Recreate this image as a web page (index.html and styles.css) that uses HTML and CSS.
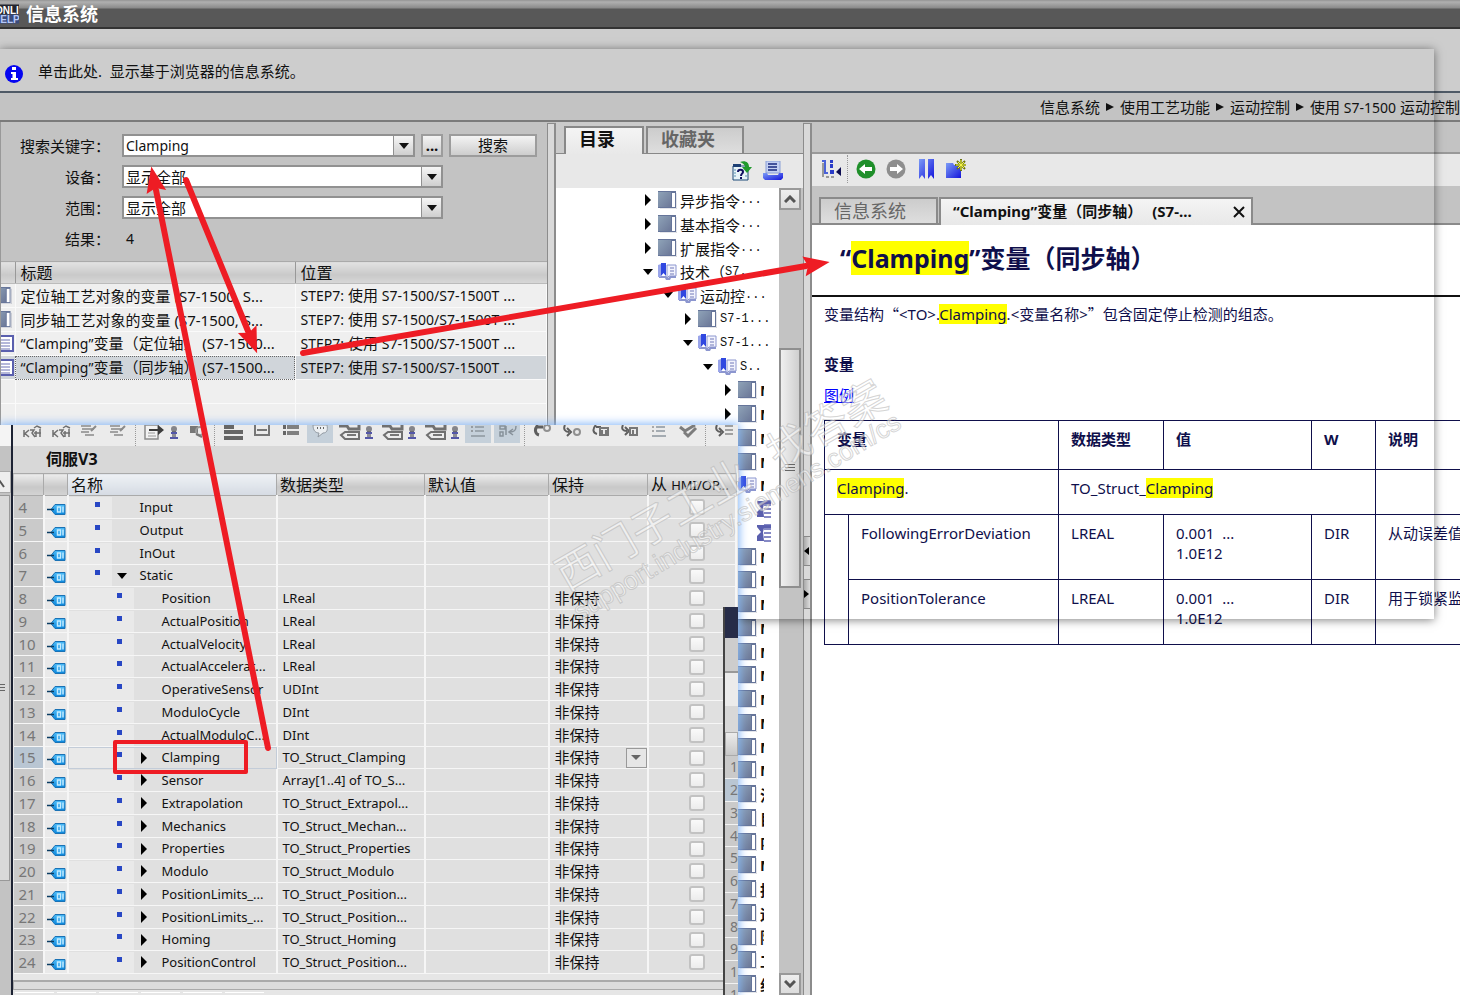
FILE: index.html
```
<!DOCTYPE html>
<html lang="zh-CN">
<head>
    <meta charset="UTF-8">
    <meta name="viewport" content="width=device-width, initial-scale=1.0">
    <title>信息系统</title>
    <link rel="stylesheet" href="styles.css">
</head>
<body>

    <!-- Shared icons -->
    <svg class="icon-defs" aria-hidden="true">
        <defs>
            <linearGradient id="bookFill" x1="0" y1="0" x2="1" y2="1">
                <stop offset="0" stop-color="#8fa3b8"/>
                <stop offset="1" stop-color="#6c7898"/>
            </linearGradient>
            <linearGradient id="tagFill" x1="0" y1="0" x2="0" y2="1">
                <stop offset="0" stop-color="#4dbcf8"/>
                <stop offset="1" stop-color="#0a86dc"/>
            </linearGradient>
            <linearGradient id="blueFill" x1="0" y1="0" x2="1" y2="1">
                <stop offset="0" stop-color="#7c9cf6"/>
                <stop offset="1" stop-color="#1414dc"/>
            </linearGradient>
            <symbol id="book" viewBox="0 0 19 18">
                <path d="M2 18h17V2" fill="none" stroke="#c8cad2" stroke-width="1"/>
                <rect x="0" y="0" width="18" height="17" fill="#66759a"/>
                <rect x="0" y="1" width="13" height="15" fill="url(#bookFill)"/>
                <rect x="14" y="2" width="3" height="14" fill="#fff"/>
            </symbol>
            <symbol id="openbook" viewBox="0 0 19 18">
                <path d="M1 13h7l2 2 2-2h6v2h-5l-1 2H8l-1-2H1z" fill="#8c96cf"/>
                <path d="M0 2l3-1v13H0z" fill="#9aa5ea"/>
                <path d="M3 0h5v13L5.500 10 3 13z" fill="#3048e0"/>
                <path d="M9 2h9v11h-7l-2 2z" fill="#f3f4fd" stroke="#8c96cf"/>
                <path d="M12 5h4M12 8h4M12 11h4" stroke="#7079b8" stroke-width="1"/>
            </symbol>
            <symbol id="page" viewBox="0 0 19 18">
                <path d="M0 1h14v3H7l-1 4 1 9H0v-5l4-4-4-5z" fill="#5a5fae"/>
                <path d="M7 1h7M7 5h7M7 9h7M7 13h7M7 17h7" stroke="#5f64b2" stroke-width="1.500"/>
            </symbol>
            <symbol id="doc" viewBox="0 0 14 17">
                <rect x="-4" y="1" width="16" height="15" fill="#fff" stroke="#5a5fae" stroke-width="2"/>
                <path d="M0 5h9M0 8h9M0 11h9M0 14h9" stroke="#6a70b4"/>
            </symbol>
            <symbol id="tag" viewBox="0 0 19 13">
                <path d="M4 6.500l4-5h10v10H8z" fill="url(#tagFill)" stroke="#1a72b5" stroke-width="1"/>
                <path d="M0 6.500h7" stroke="#0b3c63" stroke-width="1.500"/>
                <path d="M10.500 4h3v5h-3zM16 3.500v6" fill="none" stroke="#c4ecff" stroke-width="1.500"/>
            </symbol>
            <symbol id="monitor" viewBox="0 0 26 18">
                <path d="M6 5v7M11 5l-4 3.500 4 3.500M12 5h4l-2 3 3 4M16 3l3-2 4 2M18 6v6M22 4v8M16 8h7" fill="none" stroke="#707070" stroke-width="1.500"/>
            </symbol>
            <symbol id="lines" viewBox="0 0 26 18">
                <path d="M5 1h10M6 4h12M5 7h8M9 10h9" stroke="#8a8a8a" stroke-width="1.500"/>
                <path d="M15 6l5-5" stroke="#8a8a8a" stroke-width="2"/>
            </symbol>
            <symbol id="export" viewBox="0 0 26 18">
                <path d="M4 0h13v14H4z" fill="#f2f2f2" stroke="#8c8c8c" stroke-width="1.500"/>
                <path d="M7 8h7M7 11h8" stroke="#9a9a9a"/>
                <path d="M8 4h9V0l6 5-6 5V6H8z" fill="#3d3d3d"/>
            </symbol>
            <symbol id="person" viewBox="0 0 14 18">
                <circle cx="7" cy="4" r="3" fill="#85858a"/>
                <path d="M5 6h4v4H5z" fill="#6a6a72"/>
                <path d="M4 8h6M3 13h8" stroke="#5457a8" stroke-width="2"/>
                <path d="M5 9h4v3H5z" fill="#8d8d95"/>
            </symbol>
            <symbol id="drag" viewBox="0 0 26 18">
                <path d="M6 1h8v7H6z" fill="#777"/>
                <circle cx="16" cy="6" r="4" fill="none" stroke="#999" stroke-width="2"/>
                <path d="M12 9l6 3" fill="none" stroke="#777" stroke-width="2"/>
            </symbol>
            <symbol id="bars" viewBox="0 0 26 18">
                <path d="M4 2h10M4 7h19M4 13h19" stroke="#666" stroke-width="4"/>
            </symbol>
            <symbol id="frame" viewBox="0 0 26 18">
                <path d="M6 0v10h14V0M8 5h10" fill="none" stroke="#777" stroke-width="2"/>
            </symbol>
            <symbol id="block" viewBox="0 0 26 18">
                <path d="M9 2h12M9 8h12" stroke="#808080" stroke-width="4"/>
                <path d="M5 0h3v4H5zM5 6h3v4H5z" fill="#666"/>
            </symbol>
            <symbol id="bubble" viewBox="0 0 26 18">
                <path d="M6 0c0 6 3 8 6 8l-1 4 5-4c4 0 5-3 4-8z" fill="#eceff2" stroke="#929aa2"/>
                <path d="M10 3h1M13 3h1M16 3h1" stroke="#666" stroke-width="2"/>
            </symbol>
            <symbol id="tags" viewBox="0 0 26 18">
                <path d="M3 1h8l2 3h10V0" fill="none" stroke="#707070" stroke-width="3"/>
                <path d="M5 10l4-3h14v7H9z" fill="#ededed" stroke="#707070" stroke-width="2"/>
                <path d="M11 10h9" stroke="#777" stroke-width="2"/>
            </symbol>
            <symbol id="list" viewBox="0 0 26 18">
                <path d="M10 2h9M10 6h9M6 11h14" stroke="#8d969e" stroke-width="1.500"/>
                <path d="M6 2h2M6 6h2" stroke="#666"/>
            </symbol>
            <symbol id="sorted" viewBox="0 0 26 18">
                <path d="M6 1h5v3H6zM6 7h3v4H6zM22 1c0 5-2 6-6 6M19 4l-4 3 4 3M12 1v9" fill="none" stroke="#87919a" stroke-width="1.500"/>
            </symbol>
            <symbol id="undo" viewBox="0 0 26 18">
                <path d="M8 0c-4 4-3 9 1 10M7 2h6" fill="none" stroke="#5e5e5e" stroke-width="3"/>
                <circle cx="17" cy="3" r="3" fill="none" stroke="#909090" stroke-width="2"/>
            </symbol>
            <symbol id="redo" viewBox="0 0 26 18">
                <path d="M6 0c-2 4 0 7 4 7M8 3l4 4-4 4" fill="none" stroke="#5e5e5e" stroke-width="2"/>
                <circle cx="18" cy="7" r="3" fill="none" stroke="#909090" stroke-width="2"/>
            </symbol>
            <symbol id="undoBlock" viewBox="0 0 26 18">
                <path d="M8 0c-4 4-3 8 1 9M8 2h5" fill="none" stroke="#5e5e5e" stroke-width="2"/>
                <path d="M12 3h8v7h-8zM14 5v4M18 5v4" fill="none" stroke="#777" stroke-width="2"/>
            </symbol>
            <symbol id="redoBlock" viewBox="0 0 26 18">
                <path d="M6 0c-2 4 0 6 4 6M8 2l4 4-4 4" fill="none" stroke="#5e5e5e" stroke-width="2"/>
                <path d="M13 3h7v7h-7zM16 5v4" fill="none" stroke="#777" stroke-width="2"/>
            </symbol>
            <symbol id="redoList" viewBox="0 0 26 18">
                <path d="M6 0c-2 4 0 7 4 7M8 3l4 4-4 4" fill="none" stroke="#5e5e5e" stroke-width="2"/>
                <path d="M14 1h8M14 5h8M14 9h8" stroke="#888" stroke-width="1.500"/>
            </symbol>
            <symbol id="checks" viewBox="0 0 26 18">
                <path d="M5 2l5 4 10-6M9 7l4 4 8-8" fill="none" stroke="#7c7c7c" stroke-width="3"/>
            </symbol>
        </defs>
    </svg>

    <!-- Help window -->
    <div class="help-window">
        <header class="title-bar">
            <svg class="title-logo" viewBox="0 0 19 19">
                <rect width="19" height="10" fill="#23252e"/>
                <rect y="10" width="19" height="9" fill="#3a4b7c"/>
                <text class="logo-text" x="-5" y="9" fill="#fff">ONLI</text>
                <text class="logo-text" x="-7" y="18" fill="#b6c8f8">HELP</text>
            </svg>
            <h1>信息系统</h1>
        </header>

        <div class="notice">
            <svg class="info-icon" viewBox="0 0 20 20">
                <circle cx="10" cy="10" r="9" fill="#0505f0"/>
                <path d="M8 3h4v3H8zM7 8h5v6h2v2H7v-2h1.500v-4H7z" fill="#fff"/>
            </svg>
            <span>单击此处.&nbsp; 显示基于浏览器的信息系统。</span>
        </div>

        <nav class="breadcrumb">
            <span>信息系统</span><i class="caret"></i>
            <span>使用工艺功能</span><i class="caret"></i>
            <span>运动控制</span><i class="caret"></i>
            <span>使用 <small>S7-1500</small> 运动控制</span>
        </nav>

        <main class="columns">
            <section class="search-pane">
                <form class="search-form">
                    <label for="keyword">搜索关键字<span class="colon">：</span></label>
                    <div class="field-row">
                        <div class="combo keyword">
                            <input type="text" id="keyword" value="Clamping">
                            <button type="button" class="drop" aria-label="历史"></button>
                        </div>
                        <button type="button" class="btn more">...</button>
                        <button type="button" class="btn search">搜索</button>
                    </div>
                    <label for="device">设备<span class="colon">：</span></label>
                    <div class="combo"><select id="device"><option>显示全部</option></select><i class="drop"></i></div>
                    <label for="range">范围<span class="colon">：</span></label>
                    <div class="combo"><select id="range"><option>显示全部</option></select><i class="drop"></i></div>
                    <span class="label">结果<span class="colon">：</span></span>
                    <output class="count">4</output>
                </form>

                <table class="results">
                    <thead>
                        <tr><th class="col-icon"></th><th class="col-title">标题</th><th>位置</th></tr>
                    </thead>
                    <tbody>
                        <tr>
                            <td><svg class="icon-half"><use href="#book"/></svg></td>
                            <td>定位轴工艺对象的变量 (S7-1500, S...</td>
                            <td><small>STEP7:</small> 使用 <small>S7-1500/S7-1500T</small> ...</td>
                        </tr>
                        <tr>
                            <td><svg class="icon-half"><use href="#book"/></svg></td>
                            <td>同步轴工艺对象的变量 (S7-1500, S...</td>
                            <td><small>STEP7:</small> 使用 <small>S7-1500/S7-1500T</small> ...</td>
                        </tr>
                        <tr>
                            <td><svg class="icon-doc"><use href="#doc"/></svg></td>
                            <td><small>“Clamping”</small>变量（定位轴） (S7-1500...</td>
                            <td><small>STEP7:</small> 使用 <small>S7-1500/S7-1500T</small> ...</td>
                        </tr>
                        <tr class="selected">
                            <td><svg class="icon-doc"><use href="#doc"/></svg></td>
                            <td><small>“Clamping”</small>变量（同步轴） (S7-1500...</td>
                            <td><small>STEP7:</small> 使用 <small>S7-1500/S7-1500T</small> ...</td>
                        </tr>
                        <tr><td></td><td></td><td></td></tr>
                        <tr><td></td><td></td><td></td></tr>
                        <tr><td></td><td></td><td></td></tr>
                    </tbody>
                </table>
            </section>

            <div class="splitter"></div>

            <section class="toc-pane">
                <div class="tabs">
                    <button class="tab active">目录</button>
                    <button class="tab">收藏夹</button>
                </div>
                <div class="toc-tools">
                    <button class="tool" aria-label="同步目录">
                        <svg viewBox="0 0 20 20">
                            <path d="M1 5h15v14H1z" fill="#e8f4f8" stroke="#1c4a78"/>
                            <path d="M1 3h8v3H1z" fill="#1c3f74"/>
                            <path d="M6 11c0-3 5-3 5 0 0 2-2 1-2 4M9 16v2" fill="none" stroke="#101060" stroke-width="2"/>
                            <path d="M2 9h2M2 12h2M2 15h2M13 15h2" stroke="#5b93b3"/>
                            <path d="M8 1c5-2 9 0 9 5h3l-5 6-5-6h3c0-2-2-4-5-5z" fill="#1f9a2c"/>
                        </svg>
                    </button>
                    <button class="tool" aria-label="打印">
                        <svg viewBox="0 0 20 20">
                            <path d="M3 0h14v12H3z" fill="#c3cff2" stroke="#8a9fd6"/>
                            <path d="M5 3h9M5 6h9M5 9h9" stroke="#1a2a80" stroke-width="1.500"/>
                            <path d="M0 12h4l1 2h10l1-2h4v5l-2 2H2l-2-2z" fill="url(#blueFill)"/>
                        </svg>
                    </button>
                </div>
                <div class="toc-body">
                    <ul class="tree" id="tree"></ul>
                    <div class="scrollbar">
                        <button class="scroll-btn" aria-label="向上"><svg viewBox="0 0 12 8"><path d="M1 7l5-5 5 5" fill="none" stroke="#555" stroke-width="3"/></svg></button>
                        <div class="scroll-track"><div class="scroll-thumb"></div></div>
                        <button class="scroll-btn" aria-label="向下"><svg viewBox="0 0 12 8"><path d="M1 1l5 5 5-5" fill="none" stroke="#555" stroke-width="3"/></svg></button>
                    </div>
                </div>
            </section>

            <div class="splitter with-grips">
                <button class="grip" aria-label="收起"><svg viewBox="0 0 5 8"><path d="M5 0v8L0 4z"/></svg></button>
                <button class="grip" aria-label="展开"><svg viewBox="0 0 5 8"><path d="M0 0v8l5-4z"/></svg></button>
            </div>

            <section class="content-pane">
                <div class="content-tools">
                    <button class="tool" aria-label="隐藏目录">
                        <svg viewBox="0 0 20 20">
                            <path d="M1 2h3v12h3" fill="none" stroke="#4a62d8" stroke-width="2"/>
                            <path d="M9 1h3v3H9zM9 5h3v4H9zM9 11h4v4H9z" fill="#2a3cc8"/>
                            <path d="M2 4v14M5 18h3M10 18h3" stroke="#999" stroke-width="2"/>
                            <path d="M20 8v9l-5-4z" fill="#0c0c50"/>
                        </svg>
                    </button>
                    <span class="tool-sep"></span>
                    <button class="tool" aria-label="后退">
                        <svg viewBox="0 0 20 20">
                            <circle cx="10" cy="10" r="9.500" fill="#1f8f2a"/>
                            <path d="M3 10l6-5v3h7v4H9v3z" fill="#fff"/>
                        </svg>
                    </button>
                    <button class="tool" aria-label="前进">
                        <svg viewBox="0 0 20 20">
                            <circle cx="10" cy="10" r="9.500" fill="#8e8e8e"/>
                            <path d="M17 10l-6-5v3H4v4h7v3z" fill="#fff"/>
                        </svg>
                    </button>
                    <button class="tool" aria-label="书签">
                        <svg viewBox="0 0 20 20">
                            <path d="M3 0h6v20l-3-4-3 4zM12 0h6v20l-3-4-3 4z" fill="url(#blueFill)"/>
                        </svg>
                    </button>
                    <button class="tool" aria-label="添加到收藏夹">
                        <svg viewBox="0 0 20 20">
                            <path d="M0 4h7l1 2h7v13H0z" fill="url(#blueFill)"/>
                            <path d="M15 0v12M9 6h12M11 2l8 8M19 2l-8 8" stroke="#6b7410" stroke-width="2"/>
                            <path d="M15 1v10M10 6h10M12 3l6 6M18 3l-6 6" stroke="#f6f64a" stroke-width="1"/>
                        </svg>
                    </button>
                </div>

                <div class="doc-tabs">
                    <button class="doc-tab">信息系统</button>
                    <button class="doc-tab active">“Clamping”变量（同步轴）<span class="tab-more">(S7-...</span><svg class="close" viewBox="0 0 12 12"><path d="M1 1l10 10M11 1L1 11" stroke="#111" stroke-width="2"/></svg></button>
                </div>

                <article class="doc">
                    <h2>“<mark>Clamping</mark>”变量（同步轴）</h2>
                    <div class="doc-body">
                        <p>变量结构<span class="wide">“</span>&lt;TO&gt;.<mark>Clamping</mark>.&lt;变量名称&gt;<span class="wide">”</span>包含固定停止检测的组态。</p>
                        <h3>变量</h3>
                        <p class="legend"><a href="#legend">图例</a></p>
                        <table class="vars">
                            <colgroup>
                                <col class="c-indent"><col class="c-name"><col class="c-type"><col class="c-value"><col class="c-w"><col>
                            </colgroup>
                            <tr class="head">
                                <th colspan="2">变量</th><th>数据类型</th><th>值</th><th>W</th><th>说明</th>
                            </tr>
                            <tr class="struct">
                                <td colspan="2"><mark>Clamping</mark>.</td>
                                <td colspan="3">TO_Struct_<mark>Clamping</mark></td>
                                <td></td>
                            </tr>
                            <tr>
                                <td rowspan="2"></td>
                                <td>FollowingErrorDeviation</td><td>LREAL</td><td>0.001&nbsp; ...<br>1.0E12</td><td>DIR</td><td>从动误差值</td>
                            </tr>
                            <tr>
                                <td>PositionTolerance</td><td>LREAL</td><td>0.001&nbsp; ...<br>1.0E12</td><td>DIR</td><td>用于锁紧监</td>
                            </tr>
                        </table>
                    </div>
                </article>
            </section>
        </main>
    </div>

    <div class="snap-frame"></div>

    <!-- Data block editor, lies over the help window -->
    <div class="editor-window">
        <div class="edge">
            <div class="edge-top"></div>
            <div class="edge-title"></div>
            <div class="edge-btn"><svg viewBox="0 0 12 8"><path d="M-4 1l3-1 5 7" fill="none" stroke="#555" stroke-width="2"/></svg></div>
            <div class="edge-thumb"></div>
        </div>
        <div class="editor">
            <div class="editor-tools" id="editorTools"></div>
            <h2 class="editor-title">伺服V3</h2>
            <table class="db">
                <colgroup>
                    <col class="d-no"><col class="d-icon"><col class="d-name"><col class="d-type"><col class="d-default"><col class="d-hold"><col class="d-hmi">
                </colgroup>
                <thead>
                    <tr><th></th><th></th><th class="hot">名称</th><th>数据类型</th><th>默认值</th><th>保持</th><th>从 <small>HMI/OP...</small></th></tr>
                </thead>
                <tbody id="dbRows"></tbody>
            </table>
            <div class="editor-scroll"></div>
            <div class="editor-tabs"><i></i><i></i><i></i><i></i><i></i><i></i></div>
        </div>
        <div class="side-window">
            <div class="side-title"></div>
            <div class="side-gap"></div>
            <div class="side-tools"></div>
            <div class="side-name"></div>
            <div class="side-head"></div>
            <ol class="side-rows" id="sideRows"></ol>
        </div>
    </div>

    <!-- Watermark and red marks -->
    <svg class="marks" width="1460" height="995">
        <defs>
            <marker id="head" markerUnits="userSpaceOnUse" markerWidth="30" markerHeight="24" refX="4" refY="12" orient="auto">
                <path d="M28 12L2 22l4-10L2 2z" fill="#ee1c24"/>
            </marker>
        </defs>
        <g class="watermark">
            <text class="wm-name" transform="translate(567 592) rotate(-30)">西门子工业&#160;&#160;&#160;找答案</text>
            <text class="wm-url" transform="translate(580 621) rotate(-31)">support.industry.siemens.com/cs</text>
        </g>
        <g fill="none" stroke="#ee1c24" stroke-width="6" stroke-linecap="round">
            <path d="M268 748L156 190" marker-end="url(#head)"/>
            <path d="M186 180L248 331" marker-end="url(#head)"/>
            <path d="M303 353L806 266" marker-end="url(#head)"/>
            <rect x="115" y="742" width="131" height="30" stroke-width="4" stroke-linejoin="round"/>
        </g>
    </svg>

    <script src="script.js"></script>
</body>
</html>
```

FILE: styles.css
```
* {
    box-sizing: border-box;
}
body {
    margin: 0;
    height: 100vh;
    overflow: hidden;
    position: relative;
    background-color: #c3c3c3;
    font-family: "Noto Sans", "Noto Sans CJK SC", sans-serif;
    font-size: 15px;
    color: #111;
}
button, input, select {
    font: inherit;
    color: inherit;
    margin: 0;
    padding: 0;
    border: none;
    border-radius: 0;
}
small {
    font-size: 14px;
}
ul, ol {
    list-style: none;
    margin: 0;
    padding: 0;
}
table {
    border-collapse: collapse;
    table-layout: fixed;
}
th {
    font-weight: normal;
    text-align: left;
}
.icon-defs {
    position: absolute;
    width: 0;
    height: 0;
}

/* Help window */
.help-window {
    height: 100%;
    display: flex;
    flex-direction: column;
}
.title-bar {
    height: 29px;
    display: flex;
    align-items: center;
    gap: 7px;
    flex: none;
    background: linear-gradient(#949494, #b0b0b0 2px, #8a8a8a 8px, #585858 9px);
    border-bottom: 2px solid #333;
    margin-bottom: 20px;
    outline: 20px solid #cdcdcd;
}
.title-bar h1 {
    margin: 0;
    font-size: 18px;
    line-height: 24px;
    color: #fff;
}
.title-logo {
    width: 19px;
    height: 20px;
}
.logo-text {
    font: bold 10px "Liberation Sans", sans-serif;
}
.notice {
    flex: none;
    height: 44px;
    display: flex;
    align-items: center;
    gap: 14px;
    padding: 0 4px;
    background-color: #cdcdcd;
    border-bottom: 2px solid #4f5a66;
    position: relative;
}
.info-icon {
    width: 20px;
    height: 20px;
    margin-top: 8px;
}
.breadcrumb {
    flex: none;
    height: 29px;
    display: flex;
    align-items: center;
    justify-content: flex-end;
    gap: 6px;
    white-space: nowrap;
    background-color: #c3c3c3;
    border-bottom: 2px solid #7b7b7b;
    position: relative;
}
.caret {
    border-left: 8px solid #111;
    border-top: 4px solid transparent;
    border-bottom: 4px solid transparent;
}
.columns {
    flex: 1;
    min-height: 0;
    display: flex;
    background-color: #c3c3c3;
    position: relative;
}
.splitter {
    flex: none;
    width: 9px;
    margin-top: 1px;
    border: 1px solid #8c8c8c;
    border-width: 1px 2px 0 1px;
    background-color: #d9d9d9;
}
.with-grips {
    display: flex;
    flex-direction: column;
    justify-content: center;
    gap: 13px;
    padding-top: 26px;
}
.grip {
    height: 30px;
    background: linear-gradient(90deg, #aaa, #ddd);
    border: 1px solid #888;
    border-width: 1px 0;
}
.grip svg {
    display: block;
    width: 5px;
    height: 8px;
}

/* Search */
.search-pane {
    flex: none;
    width: 547px;
    border-left: 1px solid #999;
    overflow: hidden;
}
.search-form {
    display: grid;
    grid-template-columns: 109px auto;
    column-gap: 12px;
    grid-auto-rows: 31px;
    align-items: center;
    justify-content: start;
    height: 139px;
    padding-top: 8px;
}
.search-form label, .search-form .label {
    text-align: right;
    white-space: nowrap;
}
.colon {
    font-family: "Noto Sans CJK TC", sans-serif;
}
.field-row {
    display: flex;
    gap: 6px;
}
.combo {
    position: relative;
    display: flex;
    width: 321px;
    height: 23px;
    border: 2px solid #919191;
    background-color: #fff;
}
.keyword {
    width: 293px;
}
.combo input, .combo select {
    flex: 1;
    min-width: 0;
    padding-left: 2px;
    background: none;
    appearance: none;
    outline: none;
}
.combo input {
    font-size: 14px;
}
.drop {
    width: 20px;
    flex: none;
    border-left: 1px solid #919191;
    background: linear-gradient(#f6f6f6, #cfcfcf);
    display: flex;
    align-items: center;
    justify-content: center;
    pointer-events: none;
}
.drop::after {
    content: "";
    border-top: 6px solid #111;
    border-left: 5px solid transparent;
    border-right: 5px solid transparent;
}
.btn {
    height: 23px;
    line-height: 19px;
    border: 2px solid #9c9c9c;
    background: linear-gradient(#f4f4f4, #cdcdcd);
}
.more {
    width: 22px;
    font-weight: bold;
}
.search {
    width: 88px;
}
.count {
    padding-left: 4px;
    font-size: 14px;
}
.results {
    width: 100%;
    background-color: #efefef;
}
.col-icon {
    width: 14px;
}
.col-title {
    width: 280px;
}
.results th {
    height: 22px;
    padding: 0 5px;
    border-left: 1px solid #999;
    border-top: 1px solid #aaa;
    border-bottom: 1px solid #bbb;
    background: linear-gradient(#e2e2e2, #c9c9c9 60%, #d8d8d8);
    font-size: 16px;
    line-height: 18px;
}
.results td {
    height: 24px;
    padding: 0 5px;
    border: 1px solid #fafafa;
    line-height: 20px;
    white-space: nowrap;
    overflow: hidden;
}
.results th:first-child, .results td:first-child {
    padding: 0;
    border-left: none;
}
.results svg {
    display: block;
}
.icon-half {
    width: 19px;
    height: 17px;
    margin-left: -8px;
}
.icon-doc {
    width: 14px;
    height: 17px;
}
.selected td {
    background-color: #d0d5da;
}
.selected td:nth-child(2) {
    outline: 1px dotted #666;
    outline-offset: -1px;
}

/* Table of contents */
.toc-pane {
    flex: none;
    width: 247px;
    display: flex;
    flex-direction: column;
}
.tabs {
    display: flex;
    gap: 2px;
    height: 32px;
    padding: 4px 0 0 8px;
    background-color: #cbcbcb;
    border-bottom: 1px solid #888;
}
.tab {
    width: 98px;
    padding: 0 14px 4px 0;
    border: 2px solid #888;
    border-bottom: none;
    background: linear-gradient(#ccc, #dedede);
    font-size: 18px;
    line-height: 20px;
    font-weight: bold;
    color: #666;
}
.tab.active {
    width: 80px;
    height: 29px;
    padding-bottom: 6px;
    background: linear-gradient(#f4f4f4, #e8e8e8);
    color: #111;
}
.toc-tools {
    flex: none;
    display: flex;
    justify-content: flex-end;
    align-items: center;
    gap: 11px;
    height: 34px;
    padding-right: 20px;
    background-color: #e8e8e8;
}
.tool {
    width: 20px;
    height: 20px;
    background: none;
}
.tool svg {
    display: block;
    width: 20px;
    height: 20px;
}
.toc-body {
    flex: 1;
    min-height: 0;
    display: flex;
    background-color: #fff;
}
.tree {
    flex: 1;
    min-width: 0;
    overflow: hidden;
}
.tree li {
    display: flex;
    align-items: center;
    height: 24px;
    white-space: nowrap;
    overflow: hidden;
}
.tree li:nth-child(4n) {
    height: 23px;
}
.tree svg {
    flex: none;
    width: 19px;
    height: 18px;
    margin-right: 3px;
}
.level-1 { padding-left: 87px; }
.level-2 { padding-left: 107px; }
.level-3 { padding-left: 127px; }
.level-4 { padding-left: 147px; }
.level-5 { padding-left: 167px; }
.level-6 { padding-left: 201px; }
.arrow {
    flex: none;
    width: 15px;
    display: flex;
    justify-content: flex-start;
    align-items: center;
}
.arrow::before {
    content: "";
    margin-left: 2px;
    border-left: 6px solid #000;
    border-top: 6px solid transparent;
    border-bottom: 6px solid transparent;
}
.arrow.down::before {
    margin-left: 0;
    border-top: 6px solid #000;
    border-bottom: none;
    border-left: 5px solid transparent;
    border-right: 5px solid transparent;
}
.arrow.none::before {
    display: none;
}
.tree .ascii {
    font: 12px "Liberation Mono", monospace;
}
.tree .clipped {
    width: 4px;
    overflow: hidden;
    font-weight: bold;
}
.scrollbar {
    flex: none;
    width: 24px;
    padding-right: 2px;
    display: flex;
    flex-direction: column;
    background-color: #c3c3c3;
}
.scroll-btn {
    height: 22px;
    border: 2px solid #999;
    background: linear-gradient(#eee, #dcdcdc);
}
.scroll-btn svg {
    width: 12px;
    height: 8px;
    display: block;
    margin: auto;
}
.scroll-track {
    flex: 1;
    padding-top: 138px;
}
.scroll-thumb {
    height: 240px;
    border: 2px solid #8f8f8f;
    background: repeating-linear-gradient(#666 0 1px, transparent 1px 3px) center / 10px 9px no-repeat, linear-gradient(90deg, #f0f0f0, #cfcfcf);
}

/* Help topic */
.content-pane {
    flex: 1;
    min-width: 0;
    display: flex;
    flex-direction: column;
    padding-top: 30px;
}
.content-tools {
    flex: none;
    display: flex;
    align-items: center;
    gap: 10px;
    height: 34px;
    padding: 0 0 3px 9px;
    border-top: 2px solid #999;
    background-color: #e8e8e8;
}
.tool-sep {
    width: 1px;
    height: 28px;
    margin: 0 -2px 0 -4px;
    border-left: 1px dotted #999;
}
.content-tools .tool {
    flex: none;
}
.doc-tabs {
    flex: none;
    display: flex;
    gap: 1px;
    height: 39px;
    padding: 11px 0 0 7px;
    border-bottom: 2px solid #8a8a8a;
}
.doc-tab {
    width: 119px;
    padding: 0 13px;
    border: 2px solid #8a8a8a;
    border-bottom: none;
    background: linear-gradient(#ccc, #dedede);
    font-size: 18px;
    line-height: 22px;
    text-align: left;
    color: #666;
}
.doc-tab.active {
    display: flex;
    align-items: center;
    width: 314px;
    height: 28px;
    padding: 0 6px 3px 12px;
    background: linear-gradient(#f4f4f4, #e8e8e8);
    font-size: 15px;
    font-weight: bold;
    color: #111;
    white-space: nowrap;
}
.tab-more {
    margin-left: 10px;
}
.close {
    flex: none;
    width: 12px;
    height: 12px;
    margin: 3px 0 0 auto;
}
.doc {
    flex: 1;
    background-color: #fff;
    color: #0f0f4b;
    overflow: hidden;
}
.doc h2 {
    margin: 0;
    height: 72px;
    padding: 14px 28px 0;
    border-bottom: 2px solid #111;
    font-size: 25px;
    line-height: 38px;
    white-space: nowrap;
}
.doc mark {
    background-color: #ff0;
    color: inherit;
}
.doc .wide {
    font-family: "Noto Sans CJK SC", sans-serif;
}
.doc-body {
    padding: 7px 0 0 12px;
}
.doc-body p, .doc h3 {
    margin: 0;
    line-height: 20px;
}
.doc h3 {
    margin-top: 30px;
    font-size: 15px;
}
.doc-body .legend {
    margin: 11px 0 15px;
}
.doc a {
    color: #00f;
}
.vars {
    width: calc(100% + 60px);
}
.c-indent { width: 24px; }
.c-name { width: 210px; }
.c-type { width: 105px; }
.c-value { width: 148px; }
.c-w { width: 64px; }
.vars th, .vars td {
    height: 65px;
    padding: 8px 12px;
    border: 1px solid #0f0f4b;
    line-height: 20px;
    vertical-align: top;
    white-space: nowrap;
}
.vars .head th {
    height: 49px;
    font-weight: bold;
}
.vars .struct td {
    height: 45px;
}

/* Data block editor */
.editor-window {
    position: absolute;
    left: 0;
    top: 425px;
    bottom: 0;
    width: 738px;
    display: flex;
    background-color: #e0e0e0;
    box-shadow: 0 0 9px 1px #7fb4f8;
}
.edge {
    flex: none;
    width: 13px;
    display: flex;
    flex-direction: column;
    background-color: #c3c3c3;
    border-right: 2px solid #1c2233;
}
.edge-top {
    height: 21px;
    background-color: #f4f4f4;
}
.edge-title {
    height: 25px;
}
.edge-btn {
    height: 22px;
    border: 1px solid #aaa;
    border-left: none;
    background-color: #eee;
}
.edge-btn svg {
    width: 12px;
    height: 8px;
}
.edge-thumb {
    height: 386px;
    margin: 2px 1px 0 0;
    border: 1px solid #999;
    border-left: none;
    background: repeating-linear-gradient(#666 0 1px, transparent 1px 3px) left / 5px 9px no-repeat, #d9d9d9;
}
.editor {
    flex: 1;
    min-width: 0;
    display: flex;
    flex-direction: column;
    overflow: hidden;
    background-color: #e6e6e6;
}
.editor-tools {
    flex: none;
    display: flex;
    gap: 3px;
    height: 21px;
    padding-left: 5px;
    background-color: #ebebeb;
}
.editor-tools button {
    flex: none;
    width: 26px;
    height: 18px;
    background: none;
}
.editor-tools button.narrow {
    width: 14px;
    margin-left: -3px;
}
.editor-tools button.on {
    background-color: #c5d0da;
}
.editor-tools svg {
    display: block;
    width: 100%;
    height: 18px;
}
.editor-tools i {
    flex: none;
    margin: 0 2px 0 1px;
    border-left: 1px dotted #999;
}
.editor-title {
    flex: none;
    margin: 0;
    height: 27px;
    padding-left: 33px;
    font-size: 16px;
    line-height: 26px;
    background-color: #d8d8d8;
}
.db {
    flex: none;
    width: 724px;
}
.d-no { width: 30px; }
.d-icon { width: 24px; }
.d-name { width: 209px; }
.d-type { width: 148px; }
.d-default { width: 124px; }
.d-hold { width: 99px; }
.db th {
    height: 22px;
    padding: 0 3px;
    border: 1px solid #aaa;
    border-left-color: #bbb;
    background: linear-gradient(#ececec, #c8c8c8 60%, #d4d4d4);
    font-size: 16px;
    line-height: 20px;
    white-space: nowrap;
}
.db th.hot {
    background: linear-gradient(#eef1f5, #d5dbe3);
}
.db td {
    height: 23px;
    padding: 0 0 0 5px;
    border: 1px solid #f6f6f6;
    border-width: 1px 2px 1px 0;
    background-color: #e0e0e0;
    font-size: 13px;
    line-height: 19px;
    white-space: nowrap;
    overflow: hidden;
}
.db small {
    font-size: 13px;
}
.db tr:nth-child(4n) td {
    height: 22px;
}
.db td:first-child {
    background-color: #cacaca;
    color: #777;
    font-size: 15px;
}
.db td:nth-child(2) {
    padding-left: 2px;
    background-color: #e9e9e9;
}
.db td:nth-child(3) {
    padding: 0;
}
.db td:nth-child(6) {
    font-size: 15px;
}
.db .current td:first-child {
    background-color: #b9c6d3;
}
.db .current td:nth-child(3) {
    outline: 1px solid #c3ccd8;
    outline-offset: -1px;
}
.tag {
    display: block;
    width: 19px;
    height: 13px;
    margin-top: 4px;
}
.name {
    display: flex;
    align-items: center;
}
.name .pad {
    flex: none;
    width: 43px;
    height: 21px;
    background-color: #e9e9e9;
    padding: 5px 12px;
    display: flex;
    justify-content: flex-end;
}
.name.deep .pad {
    width: 65px;
}
.name .pad::after {
    content: "";
    width: 5px;
    height: 5px;
    background-color: #2847c4;
}
.name .arrow {
    width: 28px;
    padding-left: 5px;
}
.hold {
    display: flex;
    justify-content: space-between;
}
.hold button {
    width: 21px;
    height: 20px;
    border: 1px solid #999;
    background: #e6e6e6;
    display: flex;
    align-items: center;
    justify-content: center;
}
.hold button::after {
    content: "";
    border-top: 5px solid #666;
    border-left: 5px solid transparent;
    border-right: 5px solid transparent;
}
.db input {
    display: block;
    appearance: none;
    width: 16px;
    height: 16px;
    margin-left: 35px;
    border: 2px solid #c2c2c2;
    border-radius: 3px;
    background: linear-gradient(#fafafa, #ececec);
}
.editor-scroll {
    flex: none;
    height: 10px;
    margin-top: 6px;
    border: 1px solid #aaa;
    border-top-width: 2px;
    background-color: #dcdcdc;
}
.editor-tabs {
    display: flex;
    gap: 3px;
    padding: 2px;
    height: 30px;
}
.editor-tabs i {
    width: 39px;
    background-color: #fff;
}
.side-window {
    position: absolute;
    right: 0;
    top: 182px;
    bottom: 0;
    width: 15px;
    display: flex;
    flex-direction: column;
    overflow: hidden;
    border-left: 2px solid #444;
    background-color: #cfcfcf;
}
.side-title { height: 31px; background-color: #262c48; }
.side-gap { height: 35px; border-bottom: 2px solid #999; background-color: #cdcdcd; }
.side-tools { height: 33px; background-color: #ebebeb; }
.side-name { height: 26px; background-color: #d8d8d8; }
.side-head { height: 24px; border: 1px solid #aaa; background: linear-gradient(#ececec, #c8c8c8); }
.side-title, .side-gap, .side-tools, .side-name, .side-head {
    flex: none;
}
.side-rows li {
    height: 23px;
    padding-left: 5px;
    border-bottom: 1px solid #f2f2f2;
    font-size: 14px;
    line-height: 22px;
    color: #777;
    background-color: #cacaca;
}
.side-rows li:nth-child(4n) {
    height: 22px;
}
.side-rows li:nth-child(2) {
    background-color: #b9c6d3;
}

/* Overlays */
.snap-frame {
    position: absolute;
    left: 0;
    top: 49px;
    width: calc(100% - 26px);
    height: 570px;
    box-shadow: 0 1px 9px rgba(0, 0, 0, 0.5);
    pointer-events: none;
}
.marks {
    position: absolute;
    left: 0;
    top: 0;
    pointer-events: none;
}
.watermark {
    fill: #fff;
    fill-opacity: 0.5;
    stroke: #aaa;
    stroke-opacity: 0.5;
    stroke-width: 1px;
}
.wm-name {
    font: 43px "Noto Sans CJK SC", sans-serif;
}
.wm-url {
    font: 26px "Liberation Sans", sans-serif;
}
```

FILE: script.js
```
// Table of contents: [level, arrow, icon, text, ascii tail]
const toc = [
    [1, '', 'book', '异步指令', '...'],
    [1, '', 'book', '基本指令', '...'],
    [1, '', 'book', '扩展指令', '...'],
    [1, 'down', 'openbook', '技术（', 'S7...'],
    [2, 'down', 'openbook', '运动控', '...'],
    [3, '', 'book', '', 'S7-1...'],
    [3, 'down', 'openbook', '', 'S7-1...'],
    [4, 'down', 'openbook', '', 'S..']
];

// Deepest level, only the first stroke of each name fits
const deep = ['M', 'M', 'M', 'M', 'open', 'page', 'page', 'M', 'M', 'M', 'M', 'M', 'M', 'M', 'M', 'M', 'M',
    '注', '目', '内', 'M', '排', '运', '限', '工', '组'];
deep.forEach(function (d) {
    if (d === 'page') {
        toc.push([6, 'none', 'page', '', '']);
    } else if (d === 'open') {
        toc.push([5, 'down', 'openbook', 'M', null]);
    } else {
        toc.push([5, '', 'book', d, null]);
    }
});

document.getElementById('tree').innerHTML = toc.map(function (t) {
    const tail = t[4] ? `<span class="ascii">${t[4]}</span>` : '';
    const cls = t[4] === null ? 'clipped' : '';
    const arrow = t[0] === 6 ? '' : `<i class="arrow ${t[1]}"></i>`;
    return `<li class="level-${t[0]}">${arrow}<svg><use href="#${t[2]}"/></svg><span class="${cls}">${t[3]}</span>${tail}</li>`;
}).join('');

// Editor toolbar, '|' is a separator and '*' marks a pressed button
const tools = ['monitor', 'monitor', 'lines', 'lines', '|', 'export', 'person', 'drag', '|', 'bars', 'frame', 'block',
    '*bubble', 'tags', 'person', 'tags', 'person', 'tags', 'person', '*list', '*sorted', '|',
    'undo', 'redo', 'undoBlock', 'redoBlock', 'list', 'checks', '|', 'redoList'];
document.getElementById('editorTools').innerHTML = tools.map(function (t) {
    if (t === '|') {
        return '<i></i>';
    }
    const name = t.replace('*', '');
    const cls = (t[0] === '*' ? 'on' : '') + (name === 'person' ? 'narrow' : '');
    return `<button class="${cls}" aria-label="${name}"><svg><use href="#${name}"/></svg></button>`;
}).join('');

// Data block rows, numbered from 4: [name, type, arrow]
const rows = [
    ['Input', '', 'none'],
    ['Output', '', 'none'],
    ['InOut', '', 'none'],
    ['Static', '', 'down'],
    ['Position', 'LReal', 'none'],
    ['ActualPosition', 'LReal', 'none'],
    ['ActualVelocity', 'LReal', 'none'],
    ['ActualAccelerat...', 'LReal', 'none'],
    ['OperativeSensor', 'UDInt', 'none'],
    ['ModuloCycle', 'DInt', 'none'],
    ['ActualModuloC...', 'DInt', 'none'],
    ['Clamping', 'TO_Struct_Clamping', ''],
    ['Sensor', 'Array[1..4] of TO_S...', ''],
    ['Extrapolation', 'TO_Struct_Extrapol...', ''],
    ['Mechanics', 'TO_Struct_Mechan...', ''],
    ['Properties', 'TO_Struct_Properties', ''],
    ['Modulo', 'TO_Struct_Modulo', ''],
    ['PositionLimits_...', 'TO_Struct_Position...', ''],
    ['PositionLimits_...', 'TO_Struct_Position...', ''],
    ['Homing', 'TO_Struct_Homing', ''],
    ['PositionControl', 'TO_Struct_Position...', '']
];
document.getElementById('dbRows').innerHTML = rows.map(function (r, i) {
    const no = i + 4;
    const hold = r[1] ? '非保持' : '';
    const drop = no === 15 ? '<button aria-label="选择"></button>' : '';
    return `
        <tr class="${no === 15 ? 'current' : ''}">
            <td>${no}</td>
            <td><svg class="tag"><use href="#tag"/></svg></td>
            <td><div class="name ${no > 7 ? 'deep' : ''}"><span class="pad"></span><i class="arrow ${r[2]}"></i>${r[0]}</div></td>
            <td>${r[1]}</td>
            <td></td>
            <td><div class="hold">${hold}${drop}</div></td>
            <td><input type="checkbox" aria-label="${r[0]}"></td>
        </tr>`;
}).join('');

// Row numbers of the window behind the editor
let side = '';
for (let n = 1; n <= 11; n++) {
    side += `<li>${n}</li>`;
}
document.getElementById('sideRows').innerHTML = side;
```
